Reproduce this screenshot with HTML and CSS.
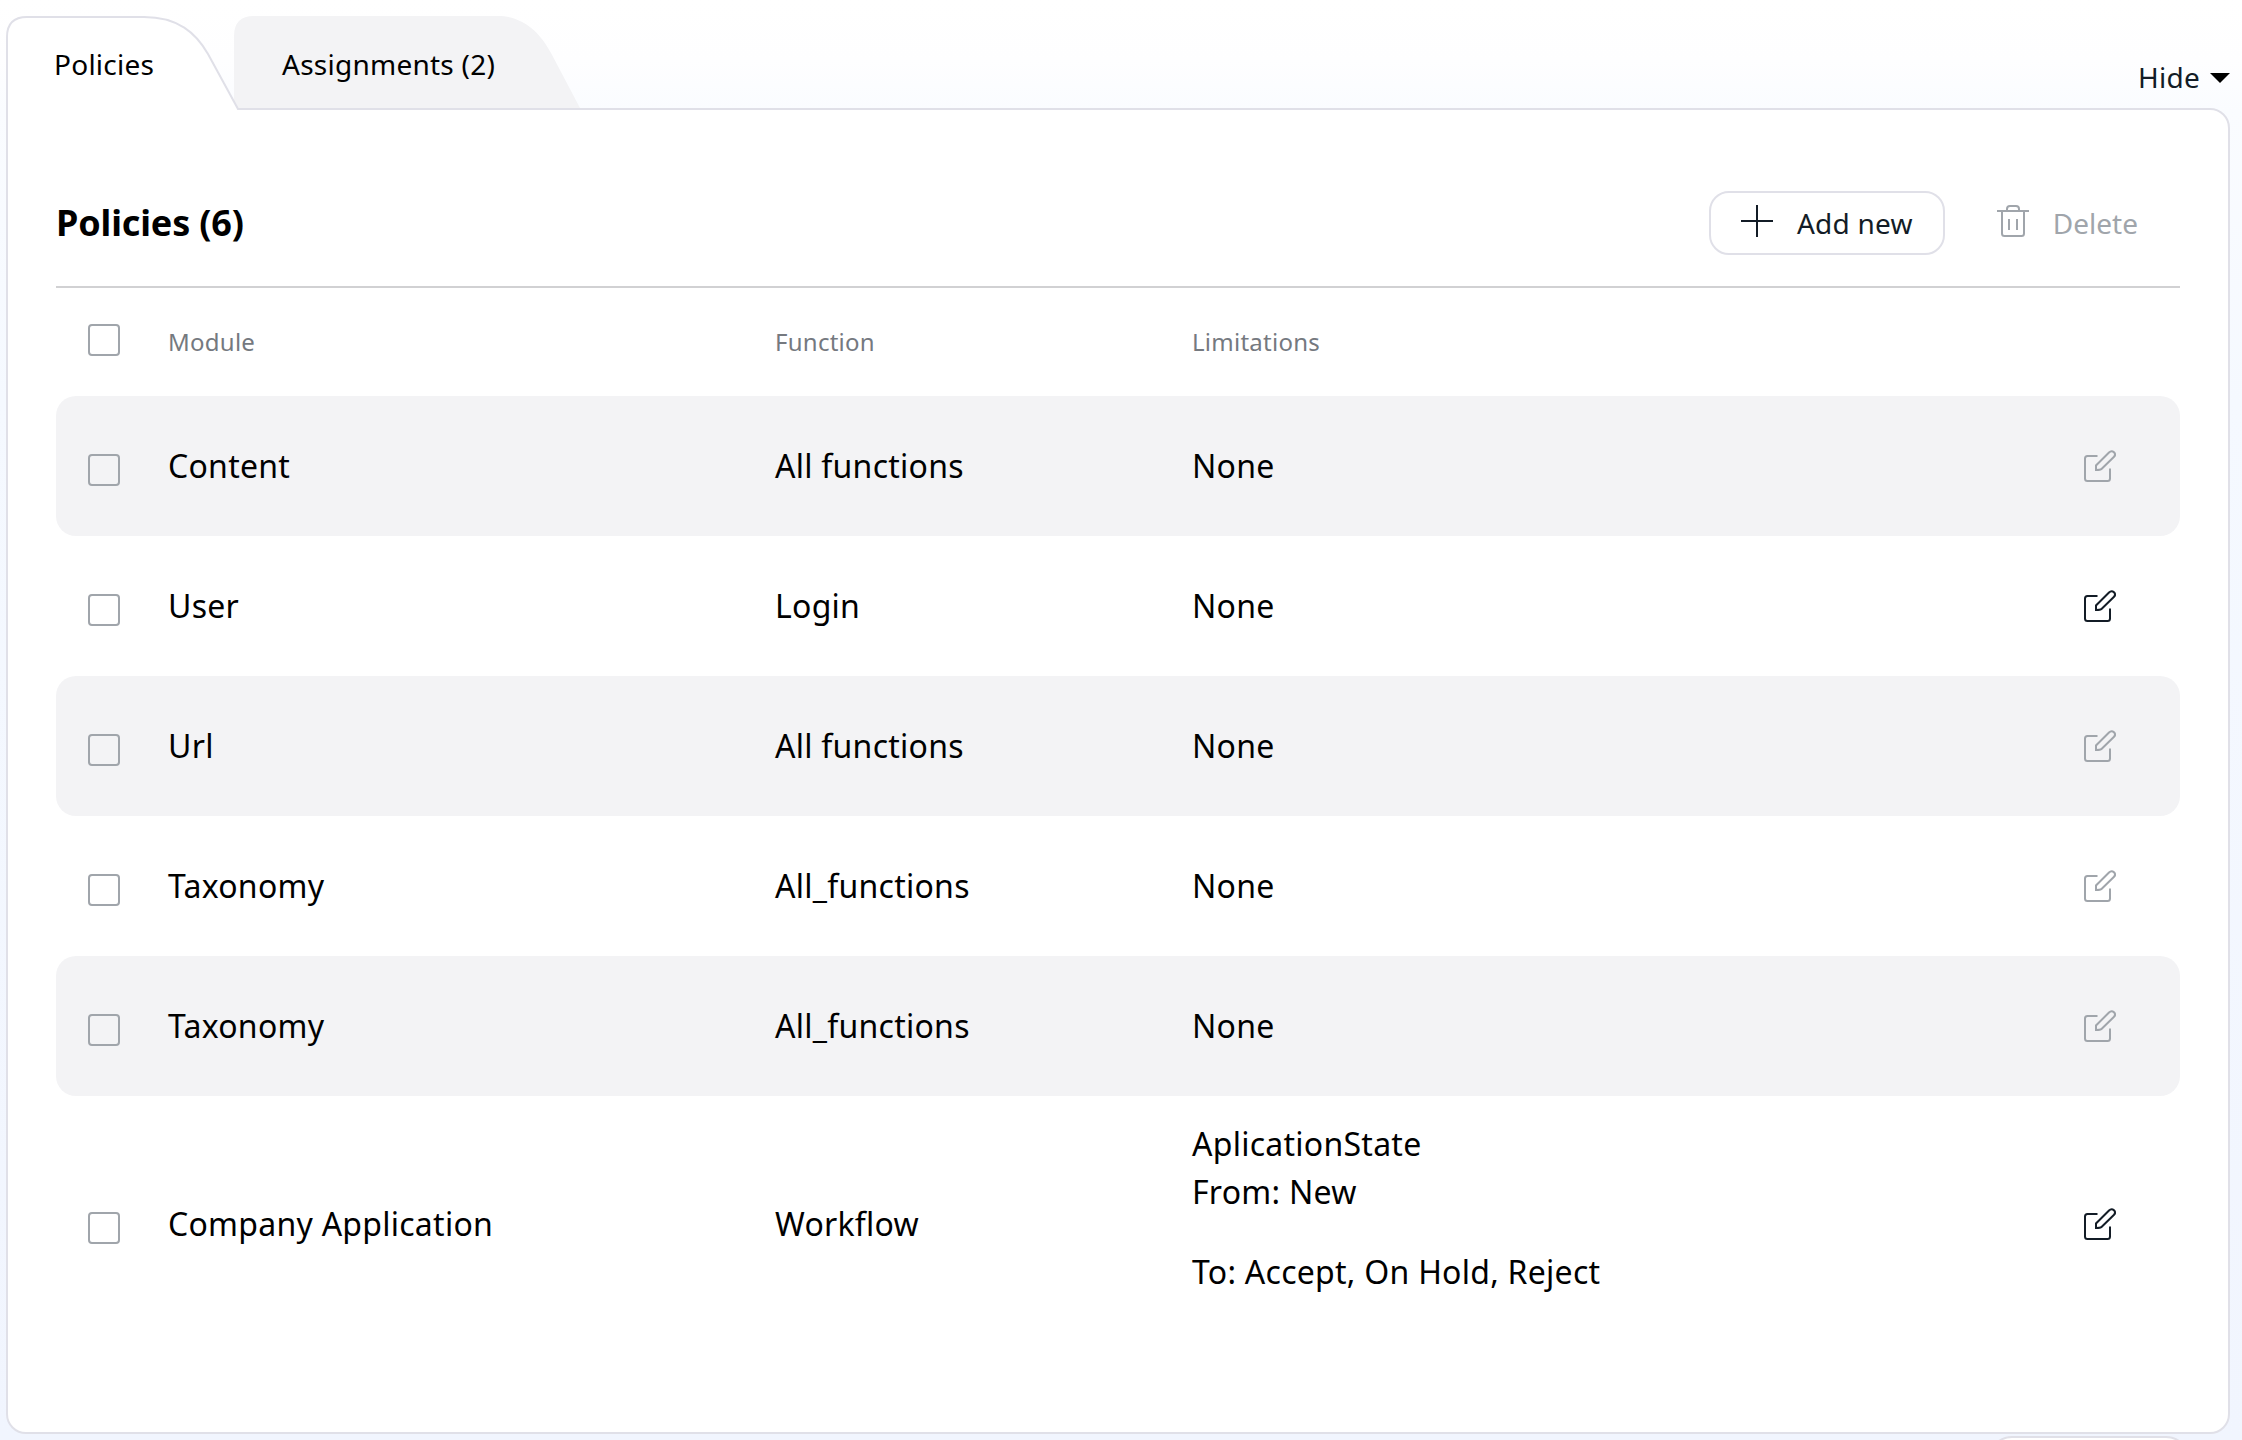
FILE: index.html
```html
<!DOCTYPE html>
<html lang="en">
<head>
<meta charset="utf-8">
<title>Policies</title>
<link rel="stylesheet" href="styles.css">
</head>
<body>
<svg width="0" height="0" class="defs">
  <symbol id="edit" viewBox="0 0 32 32"><path d="M13.500 6H3.500Q1 6 1 8.500V28.500Q1 31 3.500 31H23.500Q26 31 26 28.500V18.500M12 20V15.500L25 2.500Q27.500 0 30 2.300Q32.200 4.700 29.800 7L17.500 19Q16.500 20 12 20Z"/></symbol>
</svg>
<div class="page">
  <div class="tabs">
    <div class="tab tab-active">
      <svg class="tab-shape" width="234" height="95" viewBox="0 0 234 95"><path class="fill" d="M1 95V21Q1 1 21 1H134C172 1 190 17 202 38L232 93H234V95Z" fill="#fff"/><path class="line" d="M1 95V21Q1 1 21 1H138C172 1 190 17 202 38L232 93H234"/></svg>
      <span>Policies</span>
    </div>
    <div class="tab tab-second">
      <svg class="tab-shape" width="346" height="92" viewBox="0 0 346 92"><path class="fill" d="M0 92V20Q0 0 20 0H264C290 0 307 18 317 37L346 92Z" fill="#f3f3f5"/></svg>
      <span>Assignments (2)</span>
    </div>
    <div class="hide">Hide <i class="caret"></i></div>
  </div>
  <main class="panel">
    <header class="head">
      <h1>Policies (6)</h1>
      <button class="btn"><svg width="32" height="32" viewBox="0 0 32 32"><path d="M0 16H32M16 0V32"/></svg><span>Add new</span></button>
      <button class="btn btn-off"><svg width="32" height="32" viewBox="0 0 32 32"><path d="M0 6H32M5 6V28.500Q5 31 7.500 31H24.500Q27 31 27 28.500V6M10 6V4Q10 1 13 1H19Q22 1 22 4V6M12 14V25M20 14V25"/></svg><span>Delete</span></button>
    </header>
    <div class="row labels"><i class="check"></i><span>Module</span><span>Function</span><span>Limitations</span></div>
    <div class="row shaded"><i class="check"></i><span>Content</span><span>All functions</span><span>None</span><svg class="edit off"><use href="#edit"/></svg></div>
    <div class="row"><i class="check"></i><span>User</span><span>Login</span><span>None</span><svg class="edit"><use href="#edit"/></svg></div>
    <div class="row shaded"><i class="check"></i><span>Url</span><span>All functions</span><span>None</span><svg class="edit off"><use href="#edit"/></svg></div>
    <div class="row"><i class="check"></i><span>Taxonomy</span><span>All_functions</span><span>None</span><svg class="edit off"><use href="#edit"/></svg></div>
    <div class="row shaded"><i class="check"></i><span>Taxonomy</span><span>All_functions</span><span>None</span><svg class="edit off"><use href="#edit"/></svg></div>
    <div class="row tall"><i class="check"></i><span>Company Application</span><span>Workflow</span><div class="limits"><p>AplicationState<br>From: New</p><p>To: Accept, On Hold, Reject</p></div><svg class="edit"><use href="#edit"/></svg></div>
  </main>
  <div class="next"></div>
</div>
</body>
</html>
```
FILE: styles.css
```css
* { box-sizing: border-box; margin: 0; }
body { font-family: "Noto Sans", sans-serif; color: #000; }
.defs { display: block; position: absolute; }
.page {
  height: 1440px;
  overflow: hidden;
  padding: 16px 12px 0 6px;
  background: linear-gradient(#fff 0, #fefeff 60px, #fafcff 110px, #f5f9ff 400px, #f1f5fe 1440px);
}
.tabs { display: flex; height: 92px; font-size: 28px; line-height: 38px; letter-spacing: 0.25px; }
.tab { position: relative; padding: 29px 0 0 48px; }
.tab span { position: relative; }
.tab-shape { position: absolute; left: 0; top: 0; }
.tab-active { width: 228px; z-index: 2; }
.tab-second { width: 346px; }
.hide {
  display: flex; align-items: center; gap: 10px;
  margin-left: auto; padding-top: 30px;
  color: #131c26;
}
.caret { border: 10px solid transparent; border-top: 10px solid #000; border-bottom: 0; margin-top: 2px; }
.panel {
  height: 1326px;
  padding: 81px 48px 0;
  background: #fff;
  border: 2px solid #e0e0e8;
  border-radius: 0 20px 20px 20px;
}
.head { display: flex; height: 97px; align-items: flex-start; border-bottom: 2px solid #d1d1d3; }
h1 { flex: 1; padding-top: 1px; font-size: 36px; line-height: 62px; font-weight: 700; letter-spacing: -0.15px; }
.btn {
  display: flex; gap: 24px; height: 64px; padding: 0 30px;
  font: 28px/60px "Noto Sans", sans-serif;
  letter-spacing: 0.25px;
  color: #131c26; background: #fff;
  border: 2px solid #e0e0e8; border-radius: 20px;
}
.btn svg { margin-top: 12px; }
.btn-off { letter-spacing: 0; color: #a0a5ab; border-color: transparent; margin: 0 10px 0 20px; }
svg { fill: none; stroke: currentColor; stroke-width: 2; flex: none; }
.fill { stroke: none; }
.line { stroke: #e0e0e8; }
.row {
  display: grid;
  grid-template-columns: 80px 607px 417px 1fr 32px;
  align-items: center;
  height: 140px;
  padding: 0 64px 0 32px;
  font-size: 32px; line-height: 48px; letter-spacing: 0.26px;
  border-radius: 20px;
}
.shaded { background: #f3f3f5; }
.labels { height: 108px; font-size: 24px; color: #75797f; }
.check { width: 32px; height: 32px; margin-top: 8px; border: 2px solid #a0a5ab; border-radius: 4px; }
.labels .check { margin-top: -4px; }
.edit { width: 32px; height: 32px; color: #131c26; }
.off { color: #a0a5ab; }
.tall { height: 256px; }
.limits p { margin-bottom: 32px; }
.next { width: 202px; height: 64px; margin: 2px 0 0 1982px; border: 2px solid #e0e0e8; border-radius: 24px; background: #fff; }
```
